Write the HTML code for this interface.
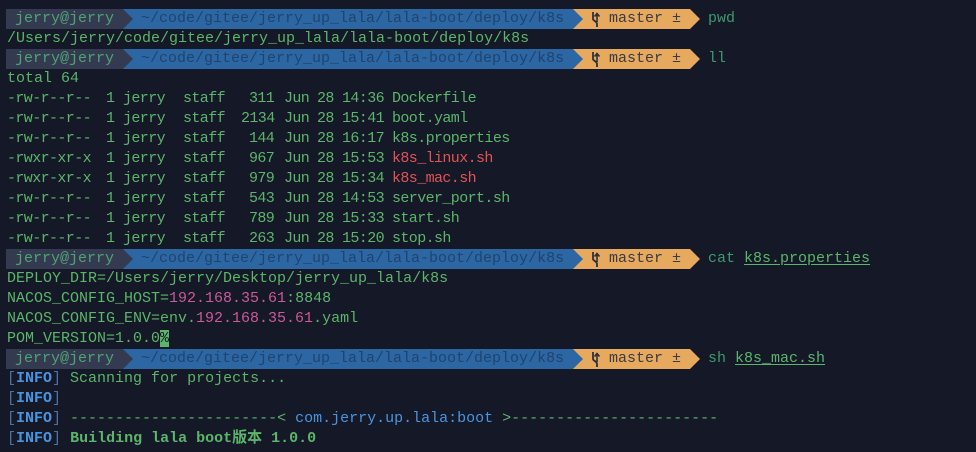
<!DOCTYPE html>
<html><head><meta charset="utf-8">
<style>
html,body{margin:0;padding:0;}
body{width:976px;height:452px;background:#151827;overflow:hidden;position:relative;
font-family:"Liberation Mono","Noto Sans CJK SC",monospace;font-size:15px;color:#5cb56a;}
.r{position:absolute;left:7px;height:20px;line-height:20px;white-space:pre;}
.bar{position:absolute;left:0;width:976px;height:20px;line-height:20px;white-space:pre;}
.g{position:absolute;left:6px;top:0;width:117px;height:20px;background:#343a50;}
.b{position:absolute;left:123px;top:0;width:450px;height:20px;background:#2c67a3;}
.o{position:absolute;left:573px;top:0;width:117px;height:20px;background:#e6a95d;}
.t1{position:absolute;left:123px;top:0;width:0;height:0;border-top:10px solid transparent;border-bottom:10px solid transparent;border-left:10px solid #343a50;}
.t2{position:absolute;left:573px;top:0;width:0;height:0;border-top:10px solid transparent;border-bottom:10px solid transparent;border-left:10px solid #2c67a3;}
.t3{position:absolute;left:690px;top:0;width:0;height:0;border-top:10px solid transparent;border-bottom:10px solid transparent;border-left:10px solid #e6a95d;}
.x{position:absolute;top:0;}
.u{text-decoration:underline;text-underline-offset:2px;color:#5cb56a;}
.c{color:#3e9a6c;}
.red{color:#e05454;}
.pk{color:#c85b98;}
.bl{color:#4a95e0;}
.br{color:#4b6fa3;}
b{font-weight:bold;}
.ls span{position:absolute;top:0;letter-spacing:-0.6px;}
</style></head><body>

<div class="bar" style="top:9px"><div class="g"></div><div class="b"></div><div class="o"></div><div class="t1"></div><div class="t2"></div><div class="t3"></div>
<span class="x" style="left:15px;color:#4fa374">jerry@jerry</span><span class="x" style="left:141px;color:#1f4370">~/code/gitee/jerry_up_lala/lala-boot/deploy/k8s</span>
<svg class="x" style="left:588px;top:2px" width="14" height="16" viewBox="0 0 14 16"><path d="M5 1V8C5 10 9 10 9 13V16" stroke="#2d3040" stroke-width="1.8" fill="none"/><path d="M9 11V3M6.5 5.5L9 2.5L11.5 5.5" stroke="#2d3040" stroke-width="1.6" fill="none"/></svg>
<span class="x" style="left:609px;color:#3a3a48">master ±</span><span class="x c" style="left:708px">pwd</span></div>

<div class="r" style="top:29px">/Users/jerry/code/gitee/jerry_up_lala/lala-boot/deploy/k8s</div>

<div class="bar" style="top:49px"><div class="g"></div><div class="b"></div><div class="o"></div><div class="t1"></div><div class="t2"></div><div class="t3"></div>
<span class="x" style="left:15px;color:#4fa374">jerry@jerry</span><span class="x" style="left:141px;color:#1f4370">~/code/gitee/jerry_up_lala/lala-boot/deploy/k8s</span>
<svg class="x" style="left:588px;top:2px" width="14" height="16" viewBox="0 0 14 16"><path d="M5 1V8C5 10 9 10 9 13V16" stroke="#2d3040" stroke-width="1.8" fill="none"/><path d="M9 11V3M6.5 5.5L9 2.5L11.5 5.5" stroke="#2d3040" stroke-width="1.6" fill="none"/></svg>
<span class="x" style="left:609px;color:#3a3a48">master ±</span><span class="x c" style="left:708px">ll</span></div>

<div class="r" style="top:69px">total 64</div>

<div class="bar ls" style="top:89px"><span style="left:7px">-rw-r--r--</span><span style="left:106px">1</span><span style="left:123px">jerry</span><span style="left:183px">staff</span><span style="left:249px">311</span><span style="left:284px">Jun</span><span style="left:317px">28</span><span style="left:342px">14:36</span><span style="left:392px">Dockerfile</span></div>
<div class="bar ls" style="top:109px"><span style="left:7px">-rw-r--r--</span><span style="left:106px">1</span><span style="left:123px">jerry</span><span style="left:183px">staff</span><span style="left:241px">2134</span><span style="left:284px">Jun</span><span style="left:317px">28</span><span style="left:342px">15:41</span><span style="left:392px">boot.yaml</span></div>
<div class="bar ls" style="top:129px"><span style="left:7px">-rw-r--r--</span><span style="left:106px">1</span><span style="left:123px">jerry</span><span style="left:183px">staff</span><span style="left:249px">144</span><span style="left:284px">Jun</span><span style="left:317px">28</span><span style="left:342px">16:17</span><span style="left:392px">k8s.properties</span></div>
<div class="bar ls" style="top:149px"><span style="left:7px">-rwxr-xr-x</span><span style="left:106px">1</span><span style="left:123px">jerry</span><span style="left:183px">staff</span><span style="left:249px">967</span><span style="left:284px">Jun</span><span style="left:317px">28</span><span style="left:342px">15:53</span><span class="red" style="left:392px">k8s_linux.sh</span></div>
<div class="bar ls" style="top:169px"><span style="left:7px">-rwxr-xr-x</span><span style="left:106px">1</span><span style="left:123px">jerry</span><span style="left:183px">staff</span><span style="left:249px">979</span><span style="left:284px">Jun</span><span style="left:317px">28</span><span style="left:342px">15:34</span><span class="red" style="left:392px">k8s_mac.sh</span></div>
<div class="bar ls" style="top:189px"><span style="left:7px">-rw-r--r--</span><span style="left:106px">1</span><span style="left:123px">jerry</span><span style="left:183px">staff</span><span style="left:249px">543</span><span style="left:284px">Jun</span><span style="left:317px">28</span><span style="left:342px">14:53</span><span style="left:392px">server_port.sh</span></div>
<div class="bar ls" style="top:209px"><span style="left:7px">-rw-r--r--</span><span style="left:106px">1</span><span style="left:123px">jerry</span><span style="left:183px">staff</span><span style="left:249px">789</span><span style="left:284px">Jun</span><span style="left:317px">28</span><span style="left:342px">15:33</span><span style="left:392px">start.sh</span></div>
<div class="bar ls" style="top:229px"><span style="left:7px">-rw-r--r--</span><span style="left:106px">1</span><span style="left:123px">jerry</span><span style="left:183px">staff</span><span style="left:249px">263</span><span style="left:284px">Jun</span><span style="left:317px">28</span><span style="left:342px">15:20</span><span style="left:392px">stop.sh</span></div>

<div class="bar" style="top:249px"><div class="g"></div><div class="b"></div><div class="o"></div><div class="t1"></div><div class="t2"></div><div class="t3"></div>
<span class="x" style="left:15px;color:#4fa374">jerry@jerry</span><span class="x" style="left:141px;color:#1f4370">~/code/gitee/jerry_up_lala/lala-boot/deploy/k8s</span>
<svg class="x" style="left:588px;top:2px" width="14" height="16" viewBox="0 0 14 16"><path d="M5 1V8C5 10 9 10 9 13V16" stroke="#2d3040" stroke-width="1.8" fill="none"/><path d="M9 11V3M6.5 5.5L9 2.5L11.5 5.5" stroke="#2d3040" stroke-width="1.6" fill="none"/></svg>
<span class="x" style="left:609px;color:#3a3a48">master ±</span><span class="x" style="left:708px"><span class="c">cat </span><span class="u">k8s.properties</span></span></div>

<div class="r" style="top:269px">DEPLOY_DIR=/Users/jerry/Desktop/jerry_up_lala/k8s</div>
<div class="r" style="top:289px">NACOS_CONFIG_HOST=<span class="pk">192.168.35.61</span>:8848</div>
<div class="r" style="top:309px">NACOS_CONFIG_ENV=env.<span class="pk">192.168.35.61</span>.yaml</div>
<div class="r" style="top:329px">POM_VERSION=1.0.0<span style="background:#5cb56a;color:#151827">%</span></div>

<div class="bar" style="top:349px"><div class="g"></div><div class="b"></div><div class="o"></div><div class="t1"></div><div class="t2"></div><div class="t3"></div>
<span class="x" style="left:15px;color:#4fa374">jerry@jerry</span><span class="x" style="left:141px;color:#1f4370">~/code/gitee/jerry_up_lala/lala-boot/deploy/k8s</span>
<svg class="x" style="left:588px;top:2px" width="14" height="16" viewBox="0 0 14 16"><path d="M5 1V8C5 10 9 10 9 13V16" stroke="#2d3040" stroke-width="1.8" fill="none"/><path d="M9 11V3M6.5 5.5L9 2.5L11.5 5.5" stroke="#2d3040" stroke-width="1.6" fill="none"/></svg>
<span class="x" style="left:609px;color:#3a3a48">master ±</span><span class="x" style="left:708px"><span class="c">sh </span><span class="u">k8s_mac.sh</span></span></div>

<div class="r" style="top:369px"><span class="br">[</span><b class="bl">INFO</b><span class="br">]</span> Scanning for projects...</div>
<div class="r" style="top:389px"><span class="br">[</span><b class="bl">INFO</b><span class="br">]</span></div>
<div class="r" style="top:409px"><span class="br">[</span><b class="bl">INFO</b><span class="br">]</span> -----------------------&lt; <span class="bl">com.jerry.up.lala:boot</span> &gt;-----------------------</div>
<div class="r" style="top:429px"><span class="br">[</span><b class="bl">INFO</b><span class="br">]</span> <b>Building lala boot版本 1.0.0</b></div>
</body></html>
